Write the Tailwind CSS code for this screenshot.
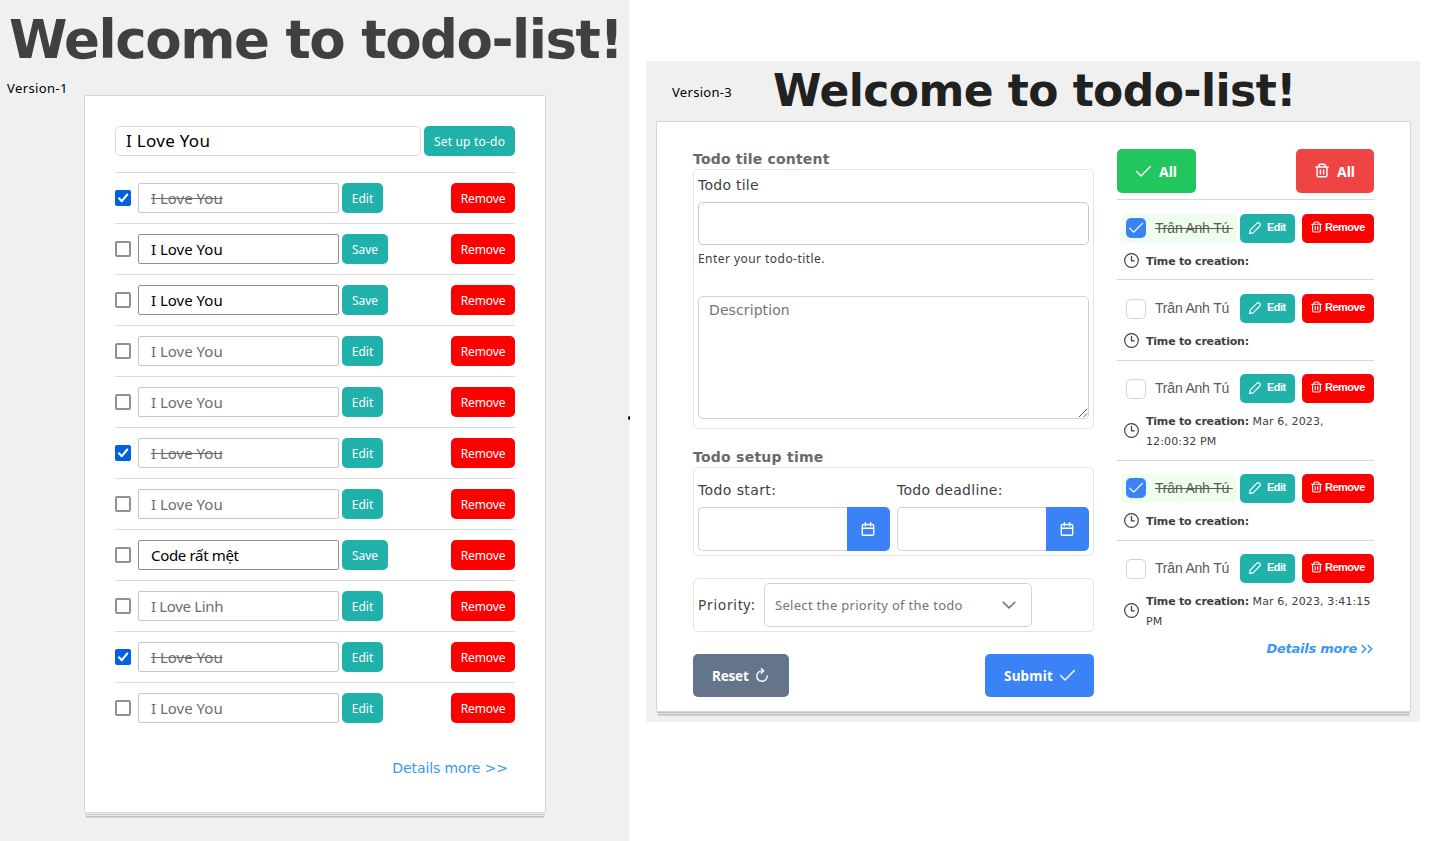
<!DOCTYPE html>
<html lang="en">
<head>
<meta charset="utf-8">
<title>Todo list</title>
<script src="https://cdn.jsdelivr.net/npm/@tailwindcss/browser@4"></script>
</head>
<body class="bg-white">
<svg class="hidden">
  <symbol id="check" viewBox="0 0 14 14"><path d="M.6 7.1 4.7 11.1 13.4 2.4" fill="none" stroke="currentColor" stroke-width="1.3" stroke-linecap="round" stroke-linejoin="round"/></symbol>
  <symbol id="trash" viewBox="0 0 14 14"><path d="M.7 3.500h12.600M2.100 3.500v8.400q0 1.400 1.400 1.400h7q1.400 0 1.400-1.400V3.500M3.800 3.300V2q0-1.300 1.300-1.300h3.800q1.300 0 1.300 1.300v1.300M5.400 6.500v3.900M8.600 6.500v3.900" fill="none" stroke="currentColor" stroke-width="1.450" stroke-linecap="round" stroke-linejoin="round"/></symbol>
  <symbol id="pencil" viewBox="0 0 14 14"><path d="M.8 13.200 1.400 9.300 9.300 1.400q1.300-1.200 2.600-.2l.9.900q1 1.300-.2 2.600L4.700 12.600Z" fill="none" stroke="currentColor" stroke-width="1.400" stroke-linecap="round" stroke-linejoin="round"/></symbol>
  <symbol id="clock" viewBox="0 0 14 14"><circle cx="7" cy="7" r="6.400" fill="none" stroke="currentColor" stroke-width="1.100"/><path d="M7 3.200V7.300H9.600" fill="none" stroke="currentColor" stroke-width="1.200" stroke-linecap="round" stroke-linejoin="round"/></symbol>
  <symbol id="calendar" viewBox="0 0 14 14"><path d="M2.500 2.500h9q1.200 0 1.200 1.200v8.300q0 1.300-1.200 1.300h-9q-1.200 0-1.200-1.300V3.700q0-1.200 1.200-1.200ZM1.300 6.300h11.400M4.400.7v3M9.600.7v3" fill="none" stroke="currentColor" stroke-width="1.400" stroke-linecap="round"/></symbol>
  <symbol id="refresh" viewBox="0 0 14 14"><path d="M8.200 2.900H7A5.200 5.200 0 1 0 12.200 8M6.200.6 8.700 2.900 6.200 5.200" fill="none" stroke="currentColor" stroke-width="1.400" stroke-linecap="round" stroke-linejoin="round"/></symbol>
</svg>
<div class="flex h-[841px] w-[1435px] overflow-hidden">

  <!-- Version 1 -->
  <section class="relative h-[841px] w-[629px] shrink-0 bg-[#f0f0f0] font-['Noto_Sans',sans-serif]">
    <h1 class="h-[79px] whitespace-nowrap pl-[9px] pt-[8px] font-['DejaVu_Sans',sans-serif] text-[53px] leading-[64px] font-bold tracking-[-1.46px] text-[#404040]">Welcome to todo-list!</h1>
    <p class="h-[17px] pl-[7px] text-[13px] leading-[19px] tracking-[0.4px] text-black">Version-1</p>
    <div class="ml-[85px] h-[716px] w-[460px] rounded-[1px] bg-white px-[30px] pt-[30px] shadow-[0_0_0_1px_#d6d6d6,0_2px_0_0_#eee,0_3px_0_0_#c4c4c4,0_5px_0_-1px_#eee,0_6px_0_-1px_#bdbdbd,0_7px_1px_-1px_#d8d8d8]">
      <div class="mb-[16px] flex h-[30px] gap-[3px]">
        <div class="w-[306px] rounded-[5px] border border-[#dcdcdc] pl-[10px] text-[17px] leading-[28px] tracking-[0.3px] text-black">I Love You</div>
        <button class="w-[91px] rounded-[5px] bg-[#20b2aa] pt-[1px] text-[12px] tracking-[0.2px] whitespace-nowrap text-white">Set up to-do</button>
      </div>
      <div id="tasks"></div>
      <p class="pt-[25px] pr-[7px] text-right font-['DejaVu_Sans',sans-serif] text-[14px] leading-[20px] tracking-[-0.1px] text-[#3897f7]">Details more &gt;&gt;</p>
    </div>
    <span class="absolute left-[628px] top-[416px] h-[4px] w-[2px] rounded-l-full bg-black"></span>
  </section>

  <!-- Version 3 -->
  <section class="mt-[61px] ml-[17px] h-[661px] w-[774px] shrink-0 bg-[#f0f0f0] font-['DejaVu_Sans',sans-serif] text-[#404040]">
    <header class="flex h-[61px] items-center">
      <p class="w-[127px] pt-[2px] pl-[26px] font-['Noto_Sans',sans-serif] text-[13px] tracking-[0.3px] text-black">Version-3</p>
      <h1 class="pb-[2px] whitespace-nowrap text-[44px] leading-[58px] font-bold tracking-[-0.56px] text-[#212121]">Welcome to todo-list!</h1>
    </header>
    <div class="ml-[11px] flex h-[589px] w-[753px] rounded-[1px] bg-white pl-[36px] pt-[27px] shadow-[0_0_0_1px_#d6d6d6,0_2px_0_0_#c0c0c0,0_3px_0_0_#e4e4e4,0_5px_0_-1px_#bdbdbd,0_6px_1px_-1px_#d8d8d8]">
      <form class="w-[401px] text-[14px]">
        <h2 class="h-[20px] leading-[20px] font-bold tracking-[0.2px] text-[#696969]">Todo tile content</h2>
        <div class="h-[260px] rounded-[5px] border border-[#e4e4e4] px-[4px]">
          <p class="h-[32px] leading-[31px] tracking-[0.25px]">Todo tile</p>
          <div class="h-[43px] rounded-[5px] border border-[#bcc8d8]"></div>
          <p class="h-[51px] pt-[4px] font-['Noto_Sans',sans-serif] text-[12px] leading-[19px] tracking-[0.45px]">Enter your todo-title.</p>
          <div class="relative h-[123px] rounded-[5px] border border-[#ced4da] pl-[10px] pt-[3px] leading-[20px] tracking-[0.1px] text-[#757575]">Description
            <svg class="absolute right-0 bottom-0 h-[10px] w-[10px]" viewBox="0 0 10 10"><path d="M1 9 9 1M5.500 9 9 5.500" stroke="#444" stroke-width=".9"/></svg>
          </div>
        </div>
        <h2 class="mt-[18px] h-[20px] leading-[20px] font-bold tracking-[0.25px] text-[#696969]">Todo setup time</h2>
        <div class="flex h-[89px] gap-[7px] rounded-[5px] border border-[#e4e4e4] px-[4px] pt-[12px]">
          <div class="w-[192px]">
            <p class="h-[27px] leading-[20px] tracking-[0.4px]">Todo start:</p>
            <div class="flex h-[44px]"><div class="flex-1 rounded-l-[5px] border border-r-0 border-[#ced4da]"></div><div class="grid w-[43px] place-items-center rounded-r-[5px] bg-[#3b82f6] pr-[1px] text-white"><svg class="h-[14px] w-[14px]"><use href="#calendar"/></svg></div></div>
          </div>
          <div class="w-[192px]">
            <p class="h-[27px] leading-[20px] tracking-[0.3px]">Todo deadline:</p>
            <div class="flex h-[44px]"><div class="flex-1 rounded-l-[5px] border border-r-0 border-[#ced4da]"></div><div class="grid w-[43px] place-items-center rounded-r-[5px] bg-[#3b82f6] pr-[1px] text-white"><svg class="h-[14px] w-[14px]"><use href="#calendar"/></svg></div></div>
          </div>
        </div>
        <div class="mt-[22px] flex h-[54px] items-center rounded-[5px] border border-[#e4e4e4] pl-[4px]">
          <p class="w-[66px] pb-[2px] font-['Noto_Sans',sans-serif] tracking-[0.65px]">Priority:</p>
          <div class="flex h-[44px] w-[268px] items-center justify-between rounded-[5px] border border-[#ced4da] pl-[10px] pr-[15px] font-['Noto_Sans',sans-serif] text-[13px] tracking-[0.3px] text-[#6c757d]"><span class="pt-[1px]">Select the priority of the todo</span>
            <svg class="h-[14px] w-[14px]" viewBox="0 0 14 14"><path d="M1.200 4.200 7 9.900l5.800-5.700" fill="none" stroke="currentColor" stroke-width="1.600" stroke-linecap="round"/></svg>
          </div>
        </div>
        <div class="mt-[22px] flex h-[43px] justify-between font-['Noto_Sans',sans-serif] text-[13.500px] font-bold text-white">
          <div class="flex w-[96px] items-center rounded-[5px] bg-[#64748b] pl-[19px] tracking-[-0.2px]"><span class="w-[43px] pt-[1px]">Reset</span><svg class="mb-[2px] h-[14px] w-[14px]"><use href="#refresh"/></svg></div>
          <div class="flex w-[109px] items-center rounded-[5px] bg-[#3b82f6] pl-[19px] tracking-[0.2px]"><span class="w-[56px] pt-[1px]">Submit</span><svg class="mb-[1px] h-[15px] w-[15px]"><use href="#check"/></svg></div>
        </div>
      </form>

      <div class="ml-[23px] w-[257px]">
        <div class="flex h-[50px] justify-between font-['Noto_Sans',sans-serif] text-[14px] font-bold text-white">
          <div class="flex h-[44px] w-[79px] items-center rounded-[5px] bg-[#22c55e] pl-[19px]"><svg class="mr-[8px] h-[15px] w-[15px]"><use href="#check"/></svg>All</div>
          <div class="flex h-[44px] w-[78px] items-center rounded-[5px] bg-[#ef4444] pl-[19px]"><svg class="mr-[8px] mb-[1px] h-[15px] w-[14px]"><use href="#trash"/></svg>All</div>
        </div>
        <div id="todos"></div>
        <p class="flex items-center justify-end pt-[1px] pr-[1px] text-[13px] leading-[18px] font-bold italic tracking-[-0.25px] text-[#3897f7]">Details more
          <svg class="ml-[4px] h-[12px] w-[12px]" viewBox="0 0 12 12"><path d="M1.200 2.500 4.700 6 1.200 9.500M7.200 2.500 10.700 6 7.200 9.500" fill="none" stroke="currentColor" stroke-width="1.500" stroke-linecap="round"/></svg>
        </p>
      </div>
    </div>
  </section>
</div>

<script>
const tasks = [
  ['I Love You', 'done'], ['I Love You', 'edit'], ['I Love You', 'edit'], ['I Love You', ''],
  ['I Love You', ''], ['I Love You', 'done'], ['I Love You', ''], ['Code rất mệt', 'edit'],
  ['I Love Linh', ''], ['I Love You', 'done'], ['I Love You', '']
];
document.getElementById('tasks').innerHTML = tasks.map(([text, state]) => `
  <div class="flex h-[51px] items-center border-t border-[#dcdcdc]">
    ${state === 'done'
      ? '<div class="mr-[7px] h-[16px] w-[16px] rounded-[2px] bg-[#0060df] text-white"><svg viewBox="0 0 16 16"><path d="M4 8.300 6.800 11.200 12.300 4.500" fill="none" stroke="currentColor" stroke-width="2.100" stroke-linecap="round" stroke-linejoin="round"/></svg></div>'
      : '<div class="mr-[7px] h-[16px] w-[16px] rounded-[2px] border-2 border-[#8f8f9d]"></div>'}
    <div class="mr-[3px] h-[30px] w-[201px] rounded-[2px] border pl-[12px] text-[15px] leading-[28px] ${state === 'edit' ? 'border-[#8f8f9d] text-black' : 'border-[#c7c7ce] text-[#6d6d6d]'} ${state === 'done' ? 'line-through' : ''} ${text.startsWith('Code') || text.endsWith('Linh') ? 'tracking-[-0.33px]' : ''}">${text}</div>
    <button class="h-[30px] rounded-[5px] bg-[#20b2aa] pt-[1px] text-[12px] text-white ${state === 'edit' ? 'w-[46px]' : 'w-[41px]'}">${state === 'edit' ? 'Save' : 'Edit'}</button>
    <button class="ml-auto h-[30px] w-[64px] rounded-[5px] bg-[#ff0000] pt-[1px] text-[12px] tracking-[-0.1px] text-white">Remove</button>
  </div>`).join('');

const todos = [
  [true, '', 'pt-[14px] pb-[7px]'], [false, '', 'pt-[14px] pb-[8px]'],
  [false, 'Mar 6, 2023, 12:00:32 PM', 'pt-[13px] pb-[8px]'], [true, '', 'pt-[13px] pb-[8px]'],
  [false, 'Mar 6, 2023, 3:41:15 PM', 'pt-[13px] pb-[7px]']
];
document.getElementById('todos').innerHTML = todos.map(([done, time, pad]) => `
  <div class="border-t border-[#d8d8d8] ${pad}">
    <div class="flex h-[29px] font-['Liberation_Sans',sans-serif]">
      <div class="ml-[4px] mr-[3px] flex w-[116px] items-center rounded-[5px] pl-[5px] ${done ? 'bg-[#eeffee]' : ''}">
        ${done
          ? '<div class="mr-[9px] mb-[1px] grid h-[20px] w-[20px] place-items-center rounded-[5px] bg-[#3b82f6] text-white"><svg class="h-[14px] w-[14px]"><use href="#check"/></svg></div>'
          : '<div class="mr-[9px] h-[20px] w-[20px] rounded-[5px] border border-[#ced4da]"></div>'}
        <span class="text-[14px] whitespace-pre tracking-[-0.2px] text-[#5a5a5a] ${done ? 'line-through' : ''}">Trân Anh Tú </span>
      </div>
      <button class="flex w-[55px] items-center rounded-[5px] bg-[#20b2aa] pb-[2px] pl-[9px] text-[11px] font-bold tracking-[-0.5px] text-white"><svg class="mr-[6px] h-[12px] w-[12px]"><use href="#pencil"/></svg>Edit</button>
      <button class="ml-[7px] flex w-[72px] items-center rounded-[5px] bg-[#ff0000] pb-[2px] pl-[9px] text-[11px] font-bold tracking-[-0.5px] text-white"><svg class="mr-[3px] mb-[1px] h-[12px] w-[11px]"><use href="#trash"/></svg>Remove</button>
    </div>
    <div class="mt-[9px] flex items-center pl-[7px]">
      <svg class="mr-[7px] mb-[3px] h-[15px] w-[15px] shrink-0"><use href="#clock"/></svg>
      <p class="text-[11px] leading-[20px] tracking-[0.12px]"><b class="tracking-[-0.2px]">Time to creation:</b> ${time}</p>
    </div>
  </div>`).join('');
</script>
</body>
</html>
